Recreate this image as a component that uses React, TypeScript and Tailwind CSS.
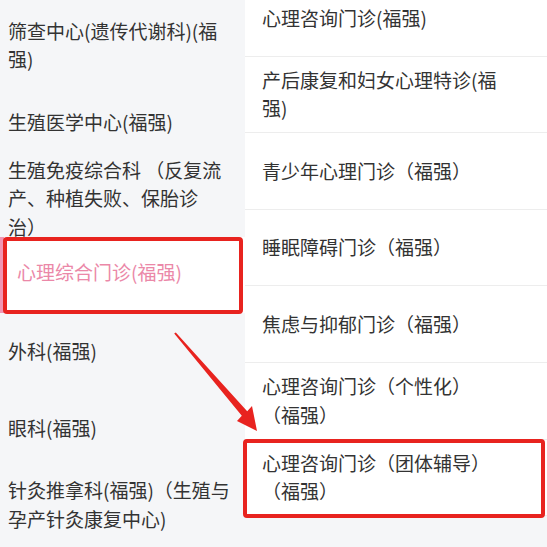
const leftItems = [
  "筛查中心(遗传代谢科)(福强)",
  "生殖医学中心(福强)",
  "生殖免疫综合科 （反复流产、种植失败、保胎诊治）",
  "心理综合门诊(福强)",
  "外科(福强)",
  "眼科(福强)",
  "针灸推拿科(福强)（生殖与孕产针灸康复中心)",
];

const rightItems = [
  "心理咨询门诊(福强)",
  "产后康复和妇女心理特诊(福强)",
  "青少年心理门诊（福强）",
  "睡眠障碍门诊（福强）",
  "焦虑与抑郁门诊（福强）",
  "心理咨询门诊（个性化）（福强）",
  "心理咨询门诊（团体辅导）（福强）",
];

export default function App() {
  return (
    <div
      className="relative h-[547px] w-[547px] overflow-hidden bg-[#f5f6f8] text-[19px] leading-[28.5px] text-[#333] [text-spacing-trim:space-all]"
      style={{ fontFamily: '"Noto Sans CJK SC", "Noto Sans", sans-serif' }}
    >
      <div className="flex h-full">
        {/* left category list */}
        <div className="w-[245px] shrink-0 pt-[7px]">
          {leftItems.map((name, i) =>
            i === 3 ? (
              <div
                key={name}
                className="relative flex h-[76.6px] items-center bg-white pl-[17px] pr-[13px] text-[#eb88a8]"
              >
                <div className="absolute left-0 top-0 h-full w-[4px] bg-[#f196b4]" />
                <span className="-mt-[5px]">{name}</span>
              </div>
            ) : (
              <div
                key={name}
                className="flex h-[76.6px] items-center pl-[8px] pr-[13px]"
              >
                <span>{name}</span>
              </div>
            )
          )}
        </div>

        {/* right clinic list */}
        <div className="flex-1">
          <div className="-mt-[20px] bg-white">
            {rightItems.map((name) => (
              <div
                key={name}
                className="flex h-[76.6px] items-center border-b border-[#ededed] pl-[17px] pr-[45px]"
              >
                <span>{name}</span>
              </div>
            ))}
          </div>
        </div>
      </div>

      {/* annotations */}
      <div className="absolute left-[3px] top-[237px] h-[77px] w-[240px] rounded-[4px] border-[4px] border-[#e8231f]" />
      <div className="absolute left-[243px] top-[439px] h-[79px] w-[302px] rounded-[4px] border-[4px] border-[#e8231f]" />
      <svg
        className="absolute left-0 top-0"
        width="547"
        height="547"
        viewBox="0 0 547 547"
      >
        <polygon
          points="175.8,332.4 247.2,411.3 252,406 257,431 237,421 241.8,415.7 174.2,333.6"
          fill="#e8231f"
        />
      </svg>
    </div>
  );
}
